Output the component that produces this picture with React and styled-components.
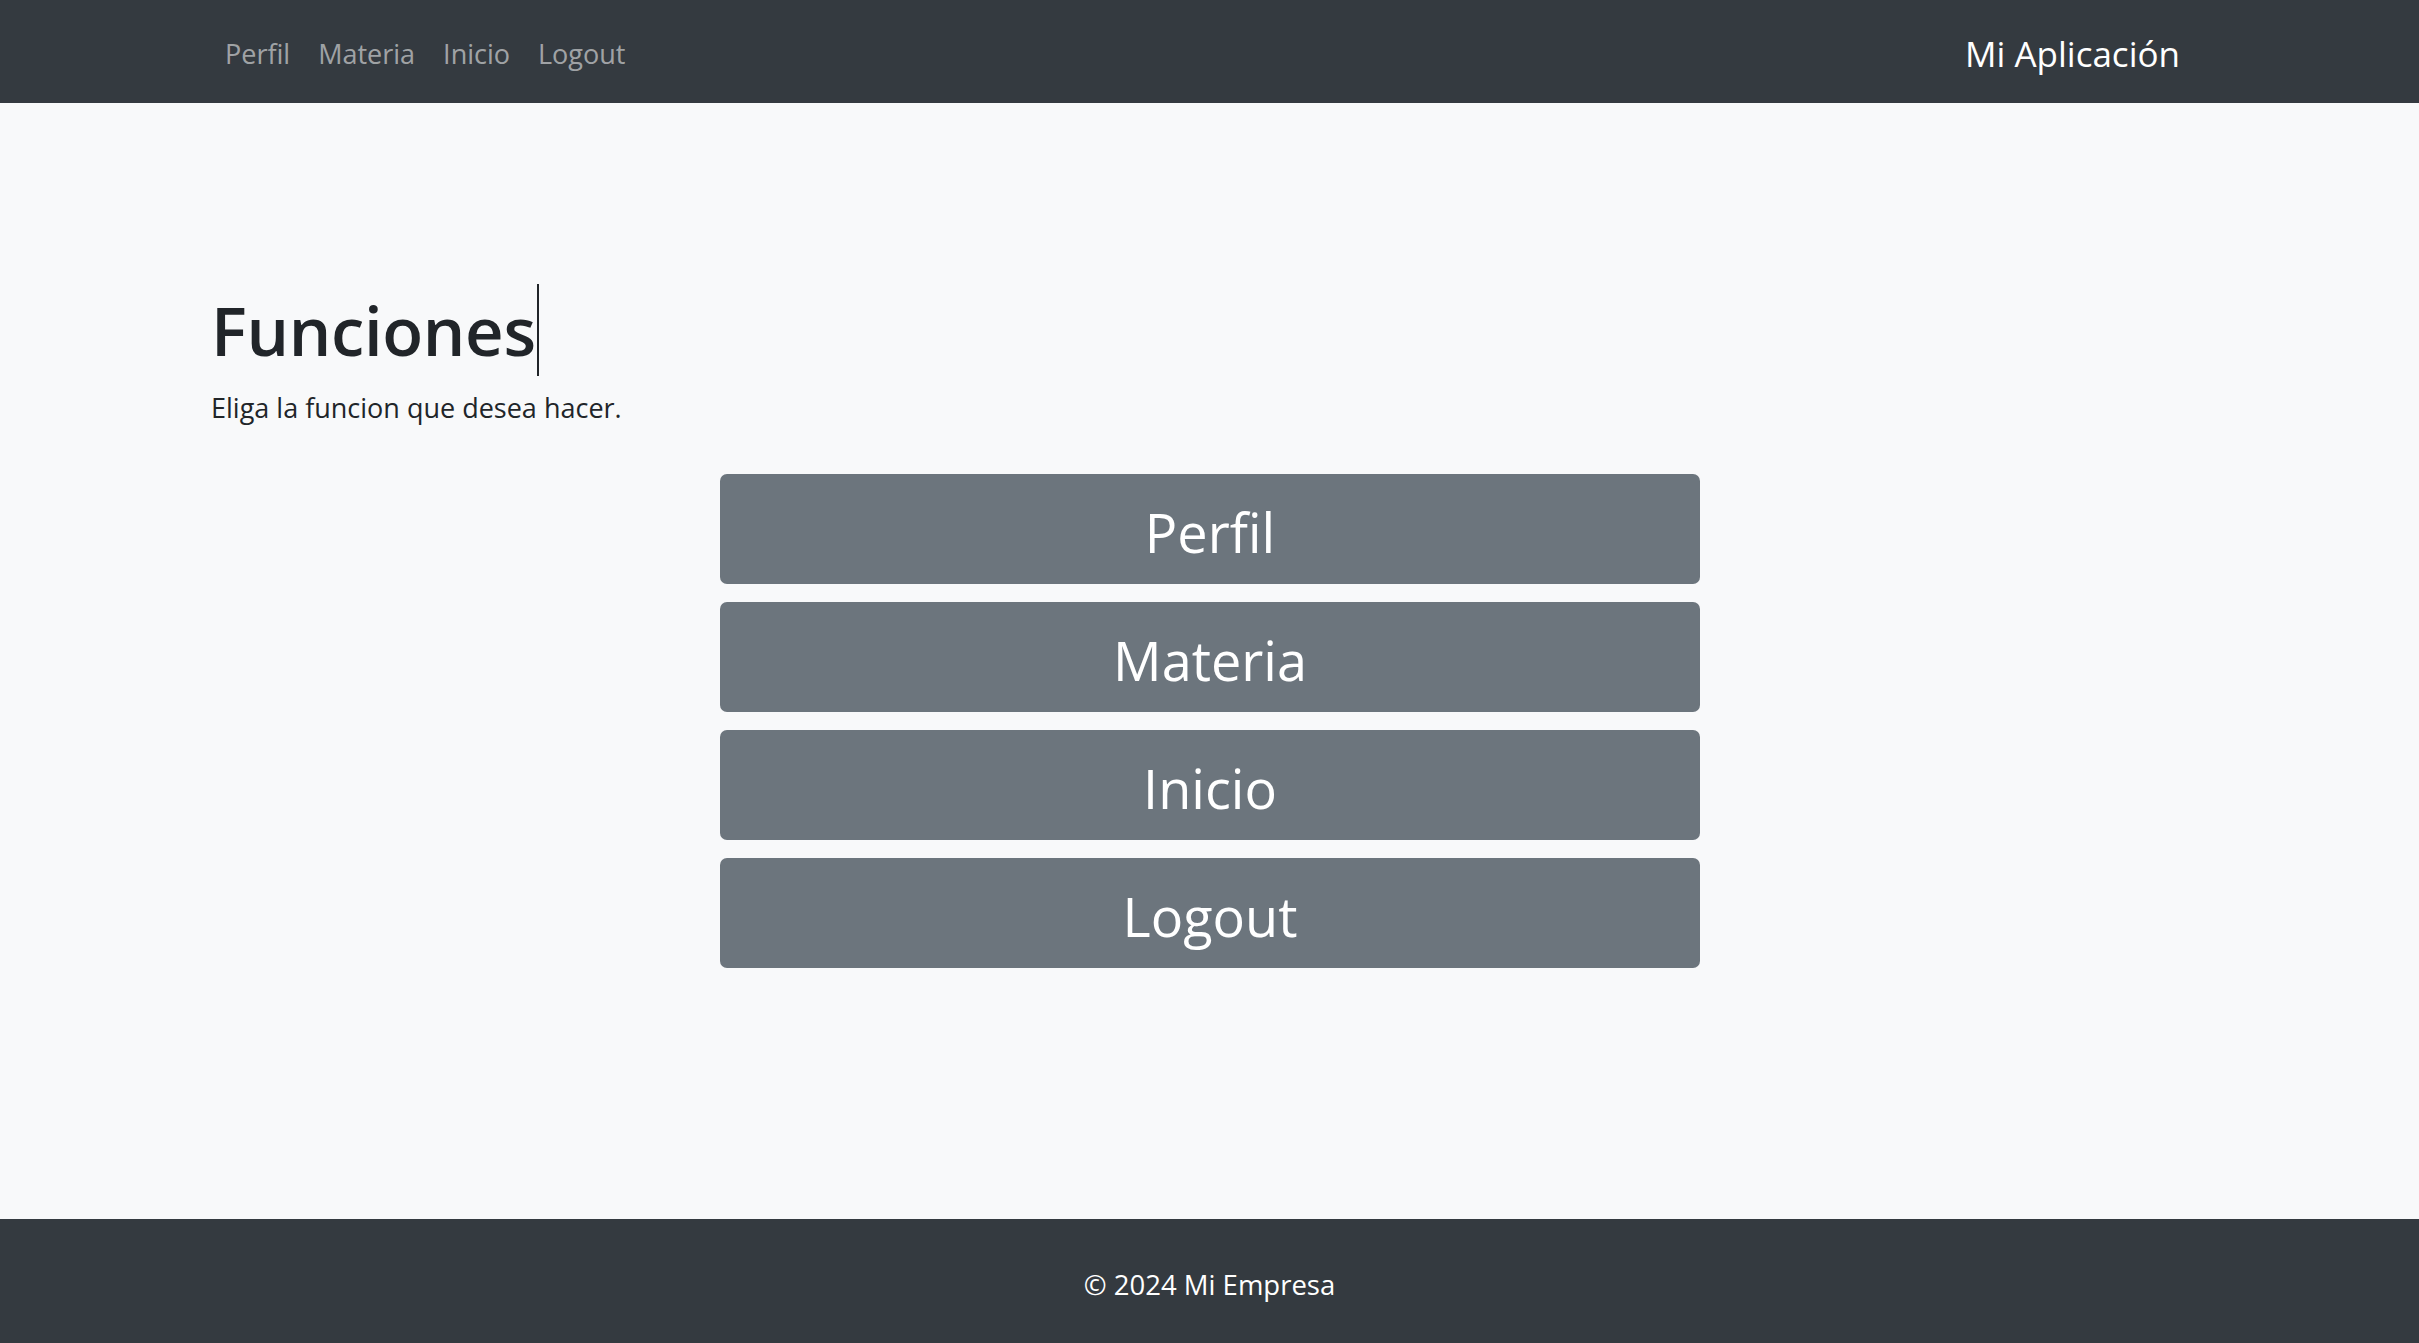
import React from "react";
import styled, { createGlobalStyle } from "styled-components";

const GlobalStyle = createGlobalStyle`
  html, body {
    margin: 0;
    padding: 0;
  }
  body {
    background: #f8f9fa;
    color: #212529;
    font-family: "Open Sans", "Noto Sans", "Liberation Sans", sans-serif;
    font-size: 27px;
    line-height: 1.5;
  }
  * { box-sizing: border-box; }
`;

const Page = styled.div`
  min-height: 100vh;
  display: flex;
  flex-direction: column;
`;

const Navbar = styled.nav`
  background: #343a40;
  height: 103px;
  display: flex;
  align-items: center;
  padding-top: 4px;
`;

const NavContainer = styled.div`
  width: 100%;
  padding: 0 211px;
  display: flex;
  align-items: center;
  justify-content: space-between;
`;

const NavList = styled.ul`
  list-style: none;
  margin: 0;
  padding: 0;
  display: flex;
  align-items: center;
`;

const NavLink = styled.a`
  display: block;
  padding: 0 14px;
  font-size: 27px;
  line-height: 42px;
  color: rgba(255, 255, 255, 0.55);
  text-decoration: none;
  cursor: pointer;
`;

const Brand = styled.a`
  font-size: 35px;
  line-height: 52px;
  color: #fff;
  text-decoration: none;
  margin-right: 28px;
`;

const Main = styled.main`
  flex: 1;
  padding: 185px 211px 40px;
  display: flex;
  flex-direction: column;
`;

const Title = styled.h1`
  margin: 0 0 15px;
  font-size: 67px;
  font-weight: 600;
  line-height: 84px;
  color: #212529;
  letter-spacing: -0.3px;
`;

const Typed = styled.span`
  border-right: 2px solid #212529;
  padding-right: 1px;
`;

const Lead = styled.p`
  margin: 0 0 45px;
  font-size: 27px;
  line-height: 42px;
`;

const ButtonStack = styled.div`
  width: 980px;
  align-self: center;
  margin-left: 1px;
  display: flex;
  flex-direction: column;
  gap: 18px;
`;

const FuncButton = styled.button`
  width: 100%;
  height: 110px;
  border: none;
  border-radius: 7px;
  background: #6c757d;
  color: #fff;
  font-family: inherit;
  font-size: 54px;
  line-height: 1;
  cursor: pointer;
  display: flex;
  align-items: center;
  justify-content: center;
  padding: 6px 0 0;
`;

const Footer = styled.footer`
  background: #343a40;
  height: 124px;
  display: flex;
  align-items: center;
  justify-content: center;
  color: #fff;
  font-size: 27.5px;
  padding-top: 8px;
`;

const items = ["Perfil", "Materia", "Inicio", "Logout"];

export default function App() {
  return (
    <>
      <GlobalStyle />
      <Page>
        <Navbar>
          <NavContainer>
            <NavList>
              {items.map((it) => (
                <li key={it}>
                  <NavLink>{it}</NavLink>
                </li>
              ))}
            </NavList>
            <Brand>Mi Aplicación</Brand>
          </NavContainer>
        </Navbar>
        <Main>
          <Title>
            <Typed>Funciones</Typed>
          </Title>
          <Lead>Eliga la funcion que desea hacer.</Lead>
          <ButtonStack>
            {items.map((it) => (
              <FuncButton key={it}>{it}</FuncButton>
            ))}
          </ButtonStack>
        </Main>
        <Footer>© 2024 Mi Empresa</Footer>
      </Page>
    </>
  );
}
